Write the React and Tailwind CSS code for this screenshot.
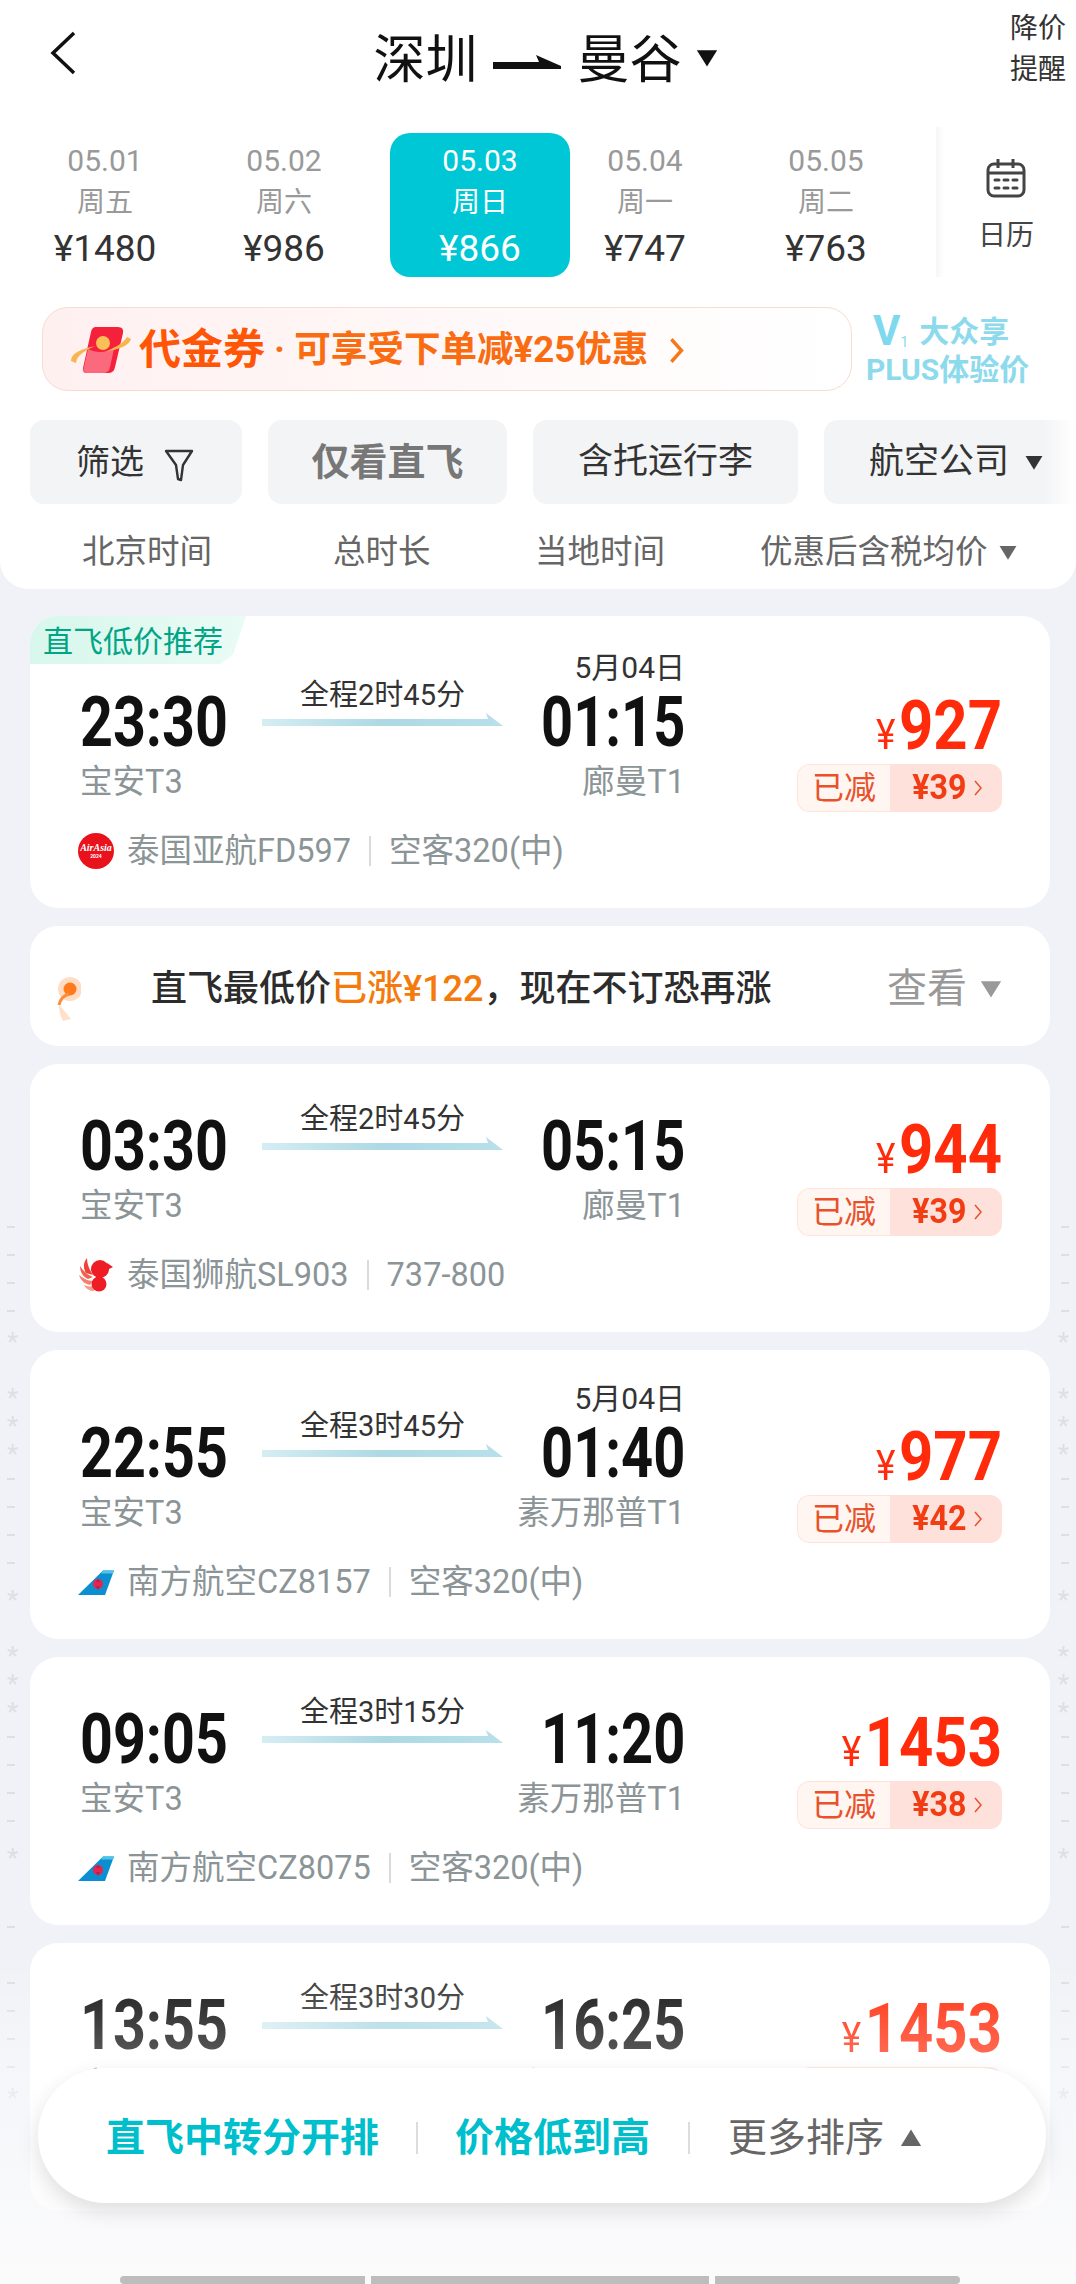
import React from "react";

const days = [
  { date: "05.01", week: "周五", price: "¥1480", w: "w-[178px]" },
  { date: "05.02", week: "周六", price: "¥986", w: "w-[180px]" },
  { date: "05.03", week: "周日", price: "¥866", w: "w-[180px] ml-[16px]", active: true },
  { date: "05.04", week: "周一", price: "¥747", w: "w-[150px]" },
  { date: "05.05", week: "周二", price: "¥763", w: "w-[212px]" },
];

const flights = [
  { tag: true, nextDay: true, pt: "pt-[34px]", from: "23:30", to: "01:15", dur: "全程2时45分", fromAp: "宝安T3", toAp: "廊曼T1", price: "927", off: "¥39", logo: "airasia", name: "泰国亚航FD597", plane: "空客320(中)" },
  { notice: true },
  { pt: "pt-[50px]", from: "03:30", to: "05:15", dur: "全程2时45分", fromAp: "宝安T3", toAp: "廊曼T1", price: "944", off: "¥39", logo: "lion", name: "泰国狮航SL903", plane: "737-800" },
  { nextDay: true, pt: "pt-[31px]", from: "22:55", to: "01:40", dur: "全程3时45分", fromAp: "宝安T3", toAp: "素万那普T1", price: "977", off: "¥42", logo: "csair", name: "南方航空CZ8157", plane: "空客320(中)" },
  { pt: "pt-[50px]", from: "09:05", to: "11:20", dur: "全程3时15分", fromAp: "宝安T3", toAp: "素万那普T1", price: "1453", off: "¥38", logo: "csair", name: "南方航空CZ8075", plane: "空客320(中)" },
  { pt: "pt-[50px]", from: "13:55", to: "16:25", dur: "全程3时30分", fromAp: "宝安T3", toAp: "素万那普T1", price: "1453", off: "¥38", logo: "csair", name: "南方航空CZ8075", plane: "空客320(中)" },
];

const sideMarks = [
  [1226, "-"], [1254, "-"], [1282, "-"], [1310, "-"], [1332, "*"], [1388, "*"], [1416, "*"], [1444, "*"], [1478, "-"],
  [1506, "-"], [1534, "-"], [1562, "-"], [1590, "*"], [1646, "*"], [1674, "*"], [1702, "*"], [1736, "-"], [1764, "-"],
  [1792, "-"], [1820, "-"], [1848, "*"], [1926, "-"], [1982, "-"], [2010, "-"], [2038, "-"], [2066, "-"], [2088, "*"],
];

function Tri({ className }) {
  return (
    <svg viewBox="0 0 10 8" className={className} fill="currentColor">
      <path d="M0.5 0.5h9L5 7.8z" />
    </svg>
  );
}

function AirlineLogo({ type }) {
  if (type === "airasia") {
    return (
      <div className="w-[36px] h-[36px] rounded-full bg-[#e8111c] flex flex-col items-center justify-center text-white leading-none shrink-0">
        <span className="text-[10px] italic font-bold leading-[10px] font-['Liberation_Serif',serif]">AirAsia</span>
        <span className="text-[5px] font-bold leading-[7px]">2024</span>
      </div>
    );
  }
  if (type === "lion") {
    return (
      <svg viewBox="0 0 36 36" className="w-[36px] h-[36px] shrink-0">
        <path d="M9 1C5 6 5 11 8 16l7 2C11 12 9 7 9 1z" fill="#f0403a" />
        <path d="M2 9c0 6 3 11 8 13l5-2C10 18 5 14 2 9z" fill="#f2604f" />
        <path d="M1 18c2 6 6 9 11 10l3-4c-5 0-10-3-14-6z" fill="#f5806f" />
        <path d="M6 28c2 4 6 6 10 6l-1-5c-4 1-6 0-9-1z" fill="#f79a8c" />
        <circle cx="22" cy="12" r="9" fill="#ee1c25" />
        <path d="M29 6l6 4-6 3z" fill="#ee1c25" />
        <circle cx="21" cy="27" r="7.5" fill="#ee1c25" />
      </svg>
    );
  }
  return (
    <svg viewBox="0 0 36 28" className="w-[36px] h-[28px] shrink-0">
      <path d="M0 27L25 2.5h11L27 27z" fill="#0c8fd0" />
      <path d="M25 2.5h11l-1 3H23z" fill="#4fc3e8" />
      <circle cx="20" cy="16" r="5" fill="#e3264f" />
      <path d="M20 11l2 3h-4zM20 22l-2-4h4z" fill="#b81f44" />
    </svg>
  );
}

function FlightCard({ f }) {
  return (
    <div className={`relative bg-white rounded-[28px] pl-[50px] pr-[48px] pb-[39px] overflow-hidden ${f.pt}`}>
      {f.tag && (
        <div className="absolute left-0 top-0 w-[216px] h-[48px] bg-gradient-to-r from-[#d8f7ec] to-[#e9fbf5] [clip-path:polygon(0_0,100%_0,94%_80%,88%_100%,0_100%)] pl-[13px] text-[30px] leading-[51px] text-[#00a585]">
          直飞低价推荐
        </div>
      )}
      {f.nextDay && (
        <div className="w-[605px] h-[40px] text-right text-[30px] leading-[36px] text-[#333]">5月04日</div>
      )}
      <div className="flex items-start h-[60px]">
        <div className="w-[182px] text-[70px] leading-[60px] mt-[2px] font-bold text-[#111]">
          <span className="inline-block origin-left scale-x-[.82]">{f.from}</span>
        </div>
        <div className="w-[241px] -mt-[13px] flex flex-col items-center">
          <div className="text-[29px] leading-[36px] text-[#333]">{f.dur}</div>
          <svg viewBox="0 0 241 14" className="w-[241px] h-[14px]">
            <defs>
              <linearGradient id="routeBar" x1="0" x2="1" y1="0" y2="0">
                <stop offset="0" stopColor="#d6edf3" />
                <stop offset="0.5" stopColor="#add9e4" />
                <stop offset="1" stopColor="#b8e0ea" />
              </linearGradient>
            </defs>
            <path d="M0 6h226l-2-6 17 13H0z" fill="url(#routeBar)" />
          </svg>
        </div>
        <div className="w-[182px] text-right text-[70px] leading-[60px] mt-[2px] font-bold text-[#111]">
          <span className="inline-block origin-right scale-x-[.8]">{f.to}</span>
        </div>
        <div className="flex-1 flex justify-end items-baseline mt-[6px] text-[#ff2b0a] leading-[60px] origin-right scale-x-[.88]">
          <span className="text-[42px] mr-[4px]">¥</span>
          <span className="text-[68px] font-bold">{f.price}</span>
        </div>
      </div>
      <div className="flex items-start h-[49px] mt-[12px]">
        <div className="w-[605px] flex justify-between text-[32.5px] leading-[40px] text-[#8b9496]">
          <span>{f.fromAp}</span>
          <span>{f.toAp}</span>
        </div>
        <div className="flex-1 flex justify-end pt-[2px]">
          <div className="flex h-[48px] rounded-[12px] overflow-hidden text-[#e9512b]">
            <div className="w-[93px] bg-[#fff5f1] border border-[#fde3da] border-r-0 rounded-l-[12px] text-center text-[32px] leading-[46px]">已减</div>
            <div className="w-[112px] bg-[#fde1da] flex items-center justify-center gap-[6px] text-[#f23c14]">
              <span className="text-[35px] font-bold scale-x-[.92]">{f.off}</span>
              <svg viewBox="0 0 8 16" className="w-[8px] h-[16px]" fill="none" stroke="#e9512b" strokeWidth="1.5">
                <path d="M1 1l6 7-6 7" />
              </svg>
            </div>
          </div>
        </div>
      </div>
      <div className="flex items-center h-[36px] mt-[22px] -ml-[2px] text-[32.5px] text-[#8b9496]">
        <AirlineLogo type={f.logo} />
        <span className="ml-[13px]">{f.name}</span>
        <span className="w-[2px] h-[30px] bg-[#d9dcde] mx-[18px]"></span>
        <span>{f.plane}</span>
      </div>
    </div>
  );
}

function Notice() {
  return (
    <div className="relative bg-white rounded-[28px] h-[120px] flex items-center pl-[121px] pr-[47px] pt-[5px] text-[36px] font-medium text-[#2c2c2c]">
      <svg viewBox="0 0 26 48" className="absolute left-[25px] top-[49px] w-[26px] h-[48px] blur-[0.6px]">
        <circle cx="15" cy="14" r="12" fill="#ffb27a" opacity="0.45" />
        <circle cx="15" cy="14" r="6.5" fill="#ff7a1a" />
        <path d="M14 19C7 21 5 25 4 30" stroke="#ff8c3a" strokeWidth="3" fill="none" />
        <path d="M4 30c0 6 1 11 4 16l8-2c-4-5-7-9-12-14z" fill="#ffd3b3" opacity="0.7" />
      </svg>
      <span>直飞最低价</span>
      <span className="text-[#f57a0c]">已涨¥122</span>
      <span>，现在不订恐再涨</span>
      <span className="ml-auto text-[40px] font-normal text-[#999]">查看</span>
      <Tri className="w-[24px] h-[18px] ml-[12px] text-[#999]" />
    </div>
  );
}

export default function App() {
  return (
    <div className="relative w-[1076px] h-[2284px] overflow-hidden bg-[#f0f2f7] font-['Roboto','Noto_Sans_CJK_SC',sans-serif]">
      <div className="h-[589px] bg-white rounded-b-[28px] overflow-hidden">
        {/* top bar */}
        <div className="relative h-[120px] flex items-start justify-center">
          <svg viewBox="0 0 26 44" className="absolute left-[50px] top-[31px] w-[26px] h-[44px]" fill="none" stroke="#111" strokeWidth="3.5">
            <path d="M24 2L3 22l21 20" />
          </svg>
          <div className="flex items-center h-[121px] ml-[16px] text-[52px] text-[#111]">
            <span>深圳</span>
            <svg viewBox="0 0 68 14" className="w-[68px] h-[14px] ml-[15px] mr-[17px] mt-[2px]" fill="#111">
              <path d="M0 7h46l-3-7 25 11v3H0z" />
            </svg>
            <span>曼谷</span>
            <Tri className="w-[24px] h-[18px] ml-[13px] -mt-[6px] text-[#111]" />
          </div>
          <div className="absolute right-[8px] top-[8px] w-[58px] text-[28px] leading-[41px] text-[#333]">降价提醒</div>
        </div>

        {/* date strip */}
        <div className="flex h-[157px] pl-[16px] mt-[5px]">
          {days.map((d) => (
            <div key={d.date} className={d.w}>
              <div className={`h-[144px] mt-[8px] flex flex-col items-center ${d.active ? "bg-[#00c7d6] rounded-[20px] text-white" : "text-[#999]"}`}>
                <span className="text-[30px] leading-[36px] mt-[10px]">{d.date}</span>
                <span className="text-[28px] leading-[40px] mt-[4px]">{d.week}</span>
                <span className={`text-[37px] leading-[44px] mt-[4px] ${d.active ? "text-white" : "text-[#333]"}`}>{d.price}</span>
              </div>
            </div>
          ))}
          <div className="relative w-[140px] ml-[4px] flex flex-col items-center">
            <div className="absolute left-0 top-[2px] w-[8px] h-[150px] bg-gradient-to-r from-[#f6f6f7] to-white"></div>
            <svg viewBox="0 0 40 40" className="w-[40px] h-[40px] mt-[33px]" fill="none" stroke="#444" strokeWidth="3">
              <rect x="2" y="6" width="36" height="32" rx="6" />
              <path d="M2 15h36M12 1v9M27 1v9" />
              <path d="M9 22h4M18 22h4M27 22h4M9 30h4M18 30h4M27 30h4" strokeLinecap="round" />
            </svg>
            <span className="text-[28px] leading-[40px] mt-[18px] text-[#444]">日历</span>
          </div>
        </div>

        {/* coupon */}
        <div className="flex items-center mt-[25px] pl-[42px]">
          <div className="w-[810px] h-[84px] rounded-[26px] border border-[#f8dccf] bg-gradient-to-r from-[#fff0f0] to-[#ffffff] flex items-center pl-[26px] pt-[2px]">
            <svg viewBox="0 0 64 50" className="w-[64px] h-[50px]">
              <path d="M27 2h22q6 0 5 6l-8 34q-1 6-7 6H18q-5 0-4-5l8-36q1-5 5-5z" fill="#f5203a" />
              <path d="M14 46l5-22c8 4 16 4 26 0l-4 18q-1 6-7 6H18q-5 0-4-4z" fill="#fb6a7c" />
              <circle cx="34" cy="18" r="7" fill="#fbbf5a" />
              <path d="M2 36c0-8 10-12 24-15-8 4-18 8-19 17zM62 14c-2 7-12 10-26 13 8-4 18-8 22-15z" fill="#f8b44e" />
            </svg>
            <span className="ml-[6px] text-[42px] font-bold text-[#ff5506] leading-none">代金券</span>
            <span className="ml-[9px] text-[36.6px] font-bold text-[#f96c12] leading-none whitespace-nowrap">· 可享受下单减¥25优惠</span>
            <svg viewBox="0 0 14 24" className="w-[16px] h-[27px] ml-[21px]" fill="none" stroke="#f5781a" strokeWidth="3">
              <path d="M2 2l9 10-9 10" />
            </svg>
          </div>
          <div className="ml-[16px] flex flex-col font-bold text-[#8ddaec] leading-none">
            <div className="flex items-end h-[38px]">
              <span className="text-[42px] leading-[36px] text-[#7fd9ee] ml-[5px]">V</span>
              <span className="text-[14px] font-normal mr-[11px]">1</span>
              <span className="text-[30px] leading-[34px]">大众享</span>
            </div>
            <span className="text-[30px] leading-[34px] mt-[4px] -ml-[2px] whitespace-nowrap">PLUS体验价</span>
          </div>
        </div>

        {/* filters */}
        <div className="relative flex mt-[29px] pl-[30px] gap-[26px] overflow-hidden">
          <div className="w-[212px] shrink-0 h-[84px] rounded-[14px] bg-[#f3f4f6] flex items-center pl-[46px] text-[34px] text-[#333]">
            筛选
            <svg viewBox="0 0 30 34" className="w-[30px] h-[34px] ml-[20px] mt-[6px]" fill="none" stroke="#333" strokeWidth="2.4" strokeLinejoin="round">
              <path d="M2 3h26L19 17l-2 15-3-1-2-14z" />
            </svg>
          </div>
          <div className="w-[239px] shrink-0 h-[84px] rounded-[14px] bg-[#f3f4f6] flex items-center justify-center text-[38px] font-bold text-[#777]">仅看直飞</div>
          <div className="w-[265px] shrink-0 h-[84px] rounded-[14px] bg-[#f3f4f6] flex items-center justify-center text-[35px] text-[#333]">含托运行李</div>
          <div className="w-[260px] shrink-0 h-[84px] rounded-l-[14px] bg-[#f3f4f6] flex items-center pl-[45px] text-[35px] text-[#333]">
            航空公司
            <Tri className="w-[20px] h-[15px] ml-[15px] text-[#333]" />
          </div>
          <div className="absolute right-0 top-0 w-[34px] h-[84px] bg-gradient-to-r from-transparent to-white"></div>
        </div>

        {/* sort row */}
        <div className="flex items-center h-[64px] mt-[16px] text-[32.5px] text-[#666]">
          <span className="ml-[82px] w-[251px]">北京时间</span>
          <span className="w-[202px]">总时长</span>
          <span className="w-[225px]">当地时间</span>
          <span className="whitespace-nowrap">优惠后含税均价</span>
          <Tri className="w-[20px] h-[15px] ml-[10px] text-[#666]" />
        </div>
      </div>

      {/* flight list */}
      <div className="flex flex-col gap-[18px] pl-[30px] pr-[26px] pt-[27px]">
        {flights.map((f, i) => (f.notice ? <Notice key={i} /> : <FlightCard key={i} f={f} />))}
      </div>

      {/* faint side marks */}
      {sideMarks.map(([top, mark]) => (
        <React.Fragment key={top}>
          {[true, false].map((left) => (
            <span
              key={String(left)}
              className={`absolute ${left ? "left-[7px]" : "right-[7px]"} ${mark === "-" ? "w-[8px] h-[2px] bg-[#dcdfe5]" : "text-[26px] leading-[20px] text-[#dcdfe5]"}`}
              style={{ top }}
            >
              {mark === "*" ? "*" : ""}
            </span>
          ))}
        </React.Fragment>
      ))}

      {/* fade and bottom sort bar */}
      <div className="absolute left-0 right-0 top-[1960px] h-[324px] bg-gradient-to-b from-transparent via-[#ffffff4d] via-[30%] to-[#fbfbfc] flex flex-col items-center">
        <div className="w-[1008px] h-[135px] mt-[108px] ml-[8px] rounded-[68px] bg-white shadow-[0_8px_20px_rgba(0,0,0,0.12)] flex items-center pl-[68px] pt-[5px] text-[39px] font-semibold text-[#00bfcc]">
          <span>直飞中转分开排</span>
          <span className="w-[2px] h-[32px] bg-[#dcdcdc] mx-[37px]"></span>
          <span>价格低到高</span>
          <span className="w-[2px] h-[32px] bg-[#dcdcdc] mx-[38px]"></span>
          <span className="text-[#666] font-normal">更多排序</span>
          <Tri className="w-[24px] h-[18px] ml-[15px] rotate-180 text-[#666]" />
        </div>
      </div>

      {/* home indicator */}
      <div className="absolute left-[120px] bottom-0 flex gap-[6px] h-[8px]">
        <div className="w-[245px] bg-[#bdbdbd] rounded-l-[4px]"></div>
        <div className="w-[338px] bg-[#bdbdbd]"></div>
        <div className="w-[245px] bg-[#bdbdbd] rounded-r-[4px]"></div>
      </div>
    </div>
  );
}
